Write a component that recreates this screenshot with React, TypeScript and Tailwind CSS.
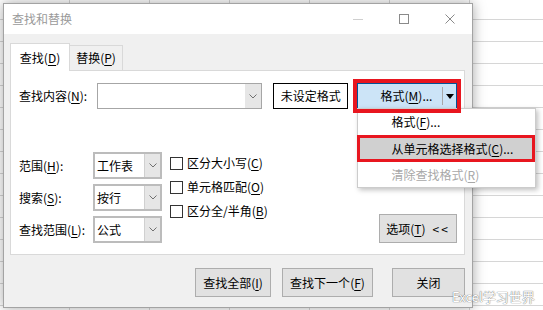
import type { ReactNode } from "react";

// underlined access key, as in "(D)"
const Key = ({ k }: { k: string }) => (
  <>
    (<span className="underline underline-offset-[2px]">{k}</span>)
  </>
);

const Chevron = () => (
  <svg width="8" height="5" viewBox="0 0 8 5">
    <polyline
      points="0.5,0.5 4,4 7.5,0.5"
      fill="none"
      stroke="#707070"
      strokeWidth="1"
    />
  </svg>
);

const Select = ({ value }: { value: string }) => (
  <div className="flex h-[27px] w-[69px] border-2 border-[#bcbcbc] bg-white">
    <div className="flex flex-1 items-center pl-[2px]">{value}</div>
    <div className="flex w-[16px] items-center justify-center border-l border-[#d0d0d0] bg-[#e6e6e6]">
      <Chevron />
    </div>
  </div>
);

const Check = ({ children }: { children: ReactNode }) => (
  <div className="flex h-[24px] items-center">
    <span className="mr-[4px] h-[13px] w-[13px] border border-[#333333] bg-white" />
    <span>{children}</span>
  </div>
);

const Field = ({ label, value }: { label: ReactNode; value: string }) => (
  <div className="flex h-[27px] items-center">
    <span className="w-[74px]">{label}</span>
    <Select value={value} />
  </div>
);

export default function App() {
  return (
    <div className="relative h-[310px] w-[543px] overflow-hidden bg-white bg-[repeating-linear-gradient(to_bottom,transparent_0px,transparent_19px,#d6d6d6_19px,#d6d6d6_20px,transparent_20px,transparent_22px),repeating-linear-gradient(to_right,transparent_0px,transparent_69px,#d6d6d6_69px,#d6d6d6_70px,transparent_70px,transparent_80px)] pl-[3px] pt-[3px] font-['Noto_Sans_CJK_SC','Noto_Sans',sans-serif] text-[12px] leading-none text-black">
      {/* Dialog window */}
      <div className="relative flex h-[305px] w-[470px] flex-col border border-[#a3a3a3] bg-[#f0f0f0] shadow-[0_0_12px_rgba(0,0,0,0.35)]">
        {/* Title bar */}
        <div className="flex h-[30px] items-center bg-white pl-[8px] pr-[17px]">
          <span className="text-[#9a9a9a]">查找和替换</span>
          <div className="ml-auto flex items-center gap-[36px]">
            <span className="h-px w-[10px] bg-[#cfcfcf]" />
            <span className="h-[10px] w-[10px] border border-[#8a8a8a]" />
            <svg width="10" height="10" viewBox="0 0 10 10">
              <path d="M0.5 0.5 L9.5 9.5 M9.5 0.5 L0.5 9.5" stroke="#8a8a8a" strokeWidth="1" />
            </svg>
          </div>
        </div>

        {/* Body */}
        <div className="flex flex-1 flex-col pl-[6px] pr-[7px] pt-[9px]">
          {/* Tabs */}
          <div className="flex h-[27px] items-end">
            <div className="relative z-10 -mb-px flex h-[28px] w-[60px] items-center justify-center border border-b-0 border-[#d9d9d9] bg-white">
              查找<Key k="D" />
            </div>
            <div className="flex h-[25px] w-[53px] items-center justify-center border border-b-0 border-l-0 border-[#d9d9d9] bg-[#f0f0f0]">
              替换<Key k="P" />
            </div>
          </div>

          {/* Tab panel */}
          <div className="relative flex h-[185px] flex-col border border-[#d9d9d9] bg-white pl-[8px] pr-[7px] pt-[12px]">
            {/* Find what */}
            <div className="flex h-[26px] items-center">
              <span className="w-[78px]">
                查找内容<Key k="N" />:
              </span>
              <div className="flex h-[26px] w-[166px] border border-[#a6a6a6] bg-white">
                <div className="flex-1" />
                <div className="flex w-[16px] items-center justify-center bg-[#e6e6e6]">
                  <Chevron />
                </div>
              </div>
              <div className="ml-[11px] flex h-[26px] w-[76px] items-center justify-center border border-black bg-white">
                未设定格式
              </div>
              <div className="relative ml-[9px] h-[26px] w-[100px]">
                <div className="flex h-full items-center border border-[#005499] bg-[#cce4f7] pl-[22px]">
                  <span>
                    格式<Key k="M" />...
                  </span>
                  <span className="ml-[10px] h-[18px] w-px bg-[#a8a8a8]" />
                  <span className="ml-[3px] h-0 w-0 border-l-[4px] border-r-[4px] border-t-[5px] border-l-transparent border-r-transparent border-t-black" />
                </div>
                <div className="pointer-events-none absolute -inset-[4px] z-30 border-4 border-[#e8161f]" />

                {/* Format menu */}
                <div className="absolute left-0 top-[25px] z-20 flex h-[80px] w-[179px] flex-col border border-[#cccccc] bg-white shadow-[2px_2px_5px_rgba(0,0,0,0.25)]">
                  <div className="flex h-[26px] items-center pl-[33px]">
                    格式<Key k="F" />...
                  </div>
                  <div className="-ml-px flex h-[27px] items-center border-[3px] border-[#e8161f] bg-[#d0d0d0] pl-[31px]">
                    从单元格选择格式<Key k="C" />...
                  </div>
                  <div className="flex h-[25px] items-center pl-[33px] text-[#a8a8a8]">
                    清除查找格式<Key k="R" />
                  </div>
                </div>
              </div>
            </div>

            {/* Options area */}
            <div className="mt-[42px] flex h-[92px] items-end">
              <div className="flex flex-col gap-[5px] self-start pt-[1px]">
                <Field label={<>范围<Key k="H" />:</>} value="工作表" />
                <Field label={<>搜索<Key k="S" />:</>} value="按行" />
                <Field label={<>查找范围<Key k="L" />:</>} value="公式" />
              </div>
              <div className="ml-[8px] flex flex-col self-start">
                <Check>区分大小写<Key k="C" /></Check>
                <Check>单元格匹配<Key k="O" /></Check>
                <Check>区分全/半角<Key k="B" /></Check>
              </div>
              <button className="ml-auto flex h-[29px] w-[78px] items-center justify-center border border-[#adadad] bg-[#e1e1e1]">
                选项<Key k="T" />
                <span className="ml-[7px] tracking-[2px]">&lt;&lt;</span>
              </button>
            </div>
          </div>

          {/* Bottom buttons */}
          <div className="mt-[13px] flex justify-end">
            <button className="flex h-[29px] w-[76px] items-center justify-center border border-[#adadad] bg-[#e1e1e1]">
              查找全部<Key k="I" />
            </button>
            <button className="ml-[11px] flex h-[29px] w-[91px] items-center justify-center border border-[#adadad] bg-[#e1e1e1]">
              查找下一个<Key k="F" />
            </button>
            <button className="ml-[19px] flex h-[29px] w-[73px] items-center justify-center border border-[#adadad] bg-[#e1e1e1]">
              关闭
            </button>
          </div>
        </div>
      </div>

      {/* Watermark */}
      <span className="absolute left-[452px] top-[289px] z-40 text-[13px] leading-[16px] text-white [text-shadow:0_0_1px_#777,0_0_1px_#777]">
        Excel学习世界
      </span>
    </div>
  );
}
